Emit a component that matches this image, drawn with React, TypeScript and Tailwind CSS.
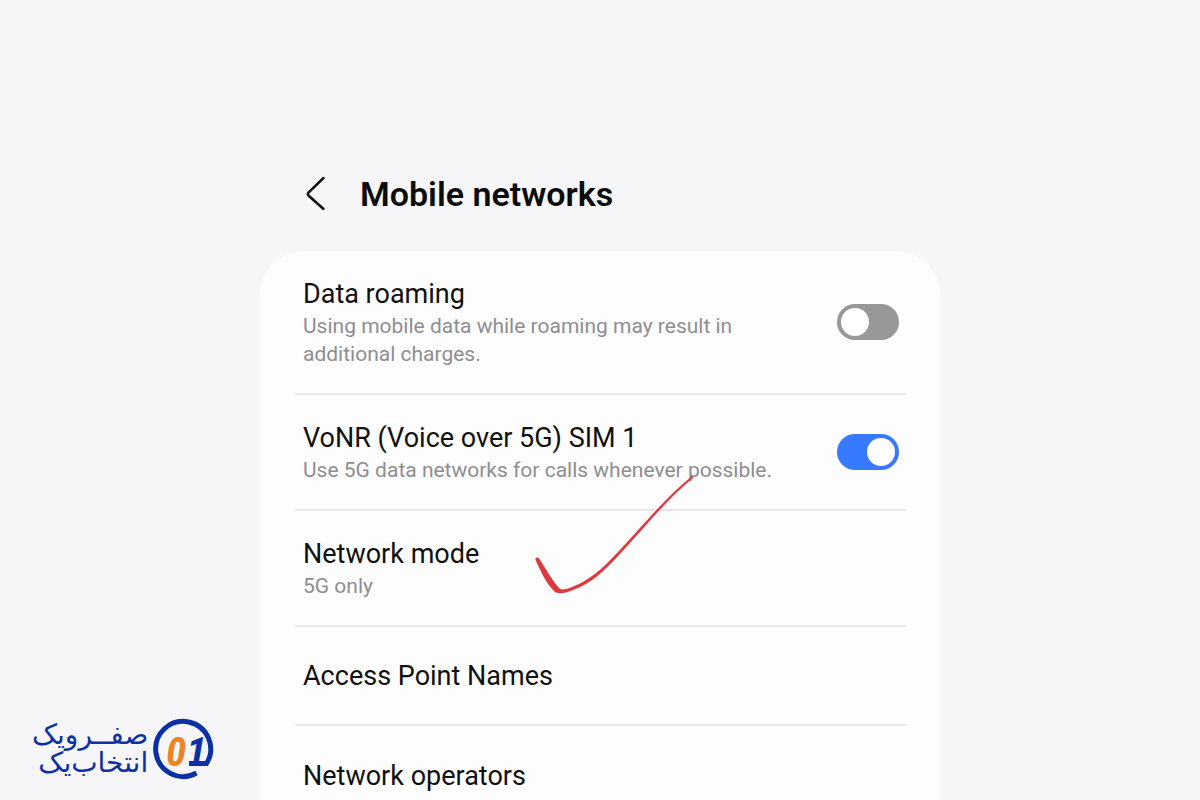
import { useState } from 'react';

type Setting = {
  id: string;
  title: string;
  description?: string;
  toggle?: boolean;
  marked?: boolean;
};

const SETTINGS: Setting[] = [
  {
    id: 'roaming',
    title: 'Data roaming',
    description: 'Using mobile data while roaming may result in additional charges.',
    toggle: true,
  },
  {
    id: 'vonr',
    title: 'VoNR (Voice over 5G) SIM 1',
    description: 'Use 5G data networks for calls whenever possible.',
    toggle: true,
  },
  { id: 'mode', title: 'Network mode', description: '5G only', marked: true },
  { id: 'apn', title: 'Access Point Names' },
  { id: 'operators', title: 'Network operators' },
];

function Switch({ id, checked, onChange }: { id: string; checked: boolean; onChange: () => void }) {
  return (
    <span className="relative inline-flex shrink-0">
      <input
        id={id}
        type="checkbox"
        role="switch"
        checked={checked}
        onChange={onChange}
        className="peer h-9 w-[62px] cursor-pointer appearance-none rounded-full bg-[#98989a] checked:bg-[#387aff]"
      />
      <span className="pointer-events-none absolute top-1 left-1 size-7 rounded-full bg-white peer-checked:left-[30px]" />
    </span>
  );
}

// Hand-drawn tick over the selected mode
function Tick() {
  return (
    <svg
      className="pointer-events-none absolute -top-9 left-60 h-[120px] w-[162px]"
      viewBox="0 0 162 120"
      fill="none"
      aria-hidden="true"
    >
      <path
        d="M0.500 85 C0 82 3 81.500 4.500 84 C11 94 18 107 25 114 C28 115 32 114 37 112 C55 105 67 94 83 77 C110 48 131 22 157 1 L158 3 C132 24 112 50 85 79 C68 97 57 108 38 115 C32 117.500 25 119.500 20 117 C12 110 6 97 0.500 85 Z"
        fill="#dc3a3f"
      />
      <path d="M157 1 V4" stroke="#c9565b" />
    </svg>
  );
}

function SettingRow({ setting, checked, onToggle }: { setting: Setting; checked: boolean; onToggle: () => void }) {
  const text = (
    <>
      <span className="block text-[27px] leading-9 text-[#111]">{setting.title}</span>
      {setting.description && (
        <span className="block text-[21px] leading-7 text-[#8e8e90]">{setting.description}</span>
      )}
    </>
  );

  return (
    <li className="relative flex min-h-[99px] items-center justify-between gap-8 border-b-2 border-[#e8e8ea] py-[25px] pr-[7px] pl-2 last:border-b-0">
      {setting.toggle ? (
        <label htmlFor={setting.id} className="max-w-[480px] cursor-pointer">
          {text}
        </label>
      ) : (
        <button type="button" className="flex-1 cursor-pointer text-left">
          {text}
        </button>
      )}
      {setting.toggle && <Switch id={setting.id} checked={checked} onChange={onToggle} />}
      {setting.marked && <Tick />}
    </li>
  );
}

function BrandLogo() {
  return (
    <div className="absolute bottom-5 left-8 flex items-center gap-1 text-[#0c31a5]">
      <p
        dir="rtl"
        lang="fa"
        className="font-['DejaVu_Sans',sans-serif] text-[28px] leading-7 whitespace-nowrap"
      >
        صفــرویک
        <br />
        انتخاب‌یک
      </p>
      <svg className="h-[62px] w-[62px]" viewBox="0 0 62 62" fill="none" role="img" aria-label="01">
        <path d="M44.500 55 A27.500 27.500 0 1 1 54.500 45.500 H37" stroke="#0c31a5" strokeWidth="5" />
        <text
          x="14"
          y="48"
          fontFamily="'Liberation Sans Narrow', 'Roboto Condensed', sans-serif"
          fontSize="41"
          fontWeight="700"
          fontStyle="italic"
          fill="#ee8326"
        >
          0<tspan fill="#0c31a5">1</tspan>
        </text>
      </svg>
    </div>
  );
}

export default function App() {
  const [enabled, setEnabled] = useState<Record<string, boolean>>({ roaming: false, vonr: true });

  return (
    <div className="relative h-screen overflow-hidden bg-[#f6f6f8] font-[Roboto,sans-serif]">
      <main className="mx-auto max-w-[680px] pt-[170px]">
        <header className="flex h-12 items-center gap-8 pl-11">
          <button type="button" aria-label="Back" className="cursor-pointer">
            <svg className="h-9 w-6" viewBox="0 0 24 36" fill="none" stroke="#111" strokeWidth="2.500">
              <path d="M19.500 2 L4.500 16.500 Q3.200 18 4.500 19.500 L19.500 33" strokeLinecap="round" />
            </svg>
          </button>
          <h1 className="text-[34px] leading-10 font-semibold text-[#0c0c0c]">Mobile networks</h1>
        </header>
        <ul className="mt-[33px] rounded-t-[44px] bg-[#fdfdfe] pr-[34px] pl-[35px]">
          {SETTINGS.map((setting) => (
            <SettingRow
              key={setting.id}
              setting={setting}
              checked={Boolean(enabled[setting.id])}
              onToggle={() => setEnabled((prev) => ({ ...prev, [setting.id]: !prev[setting.id] }))}
            />
          ))}
        </ul>
      </main>
      <BrandLogo />
    </div>
  );
}
